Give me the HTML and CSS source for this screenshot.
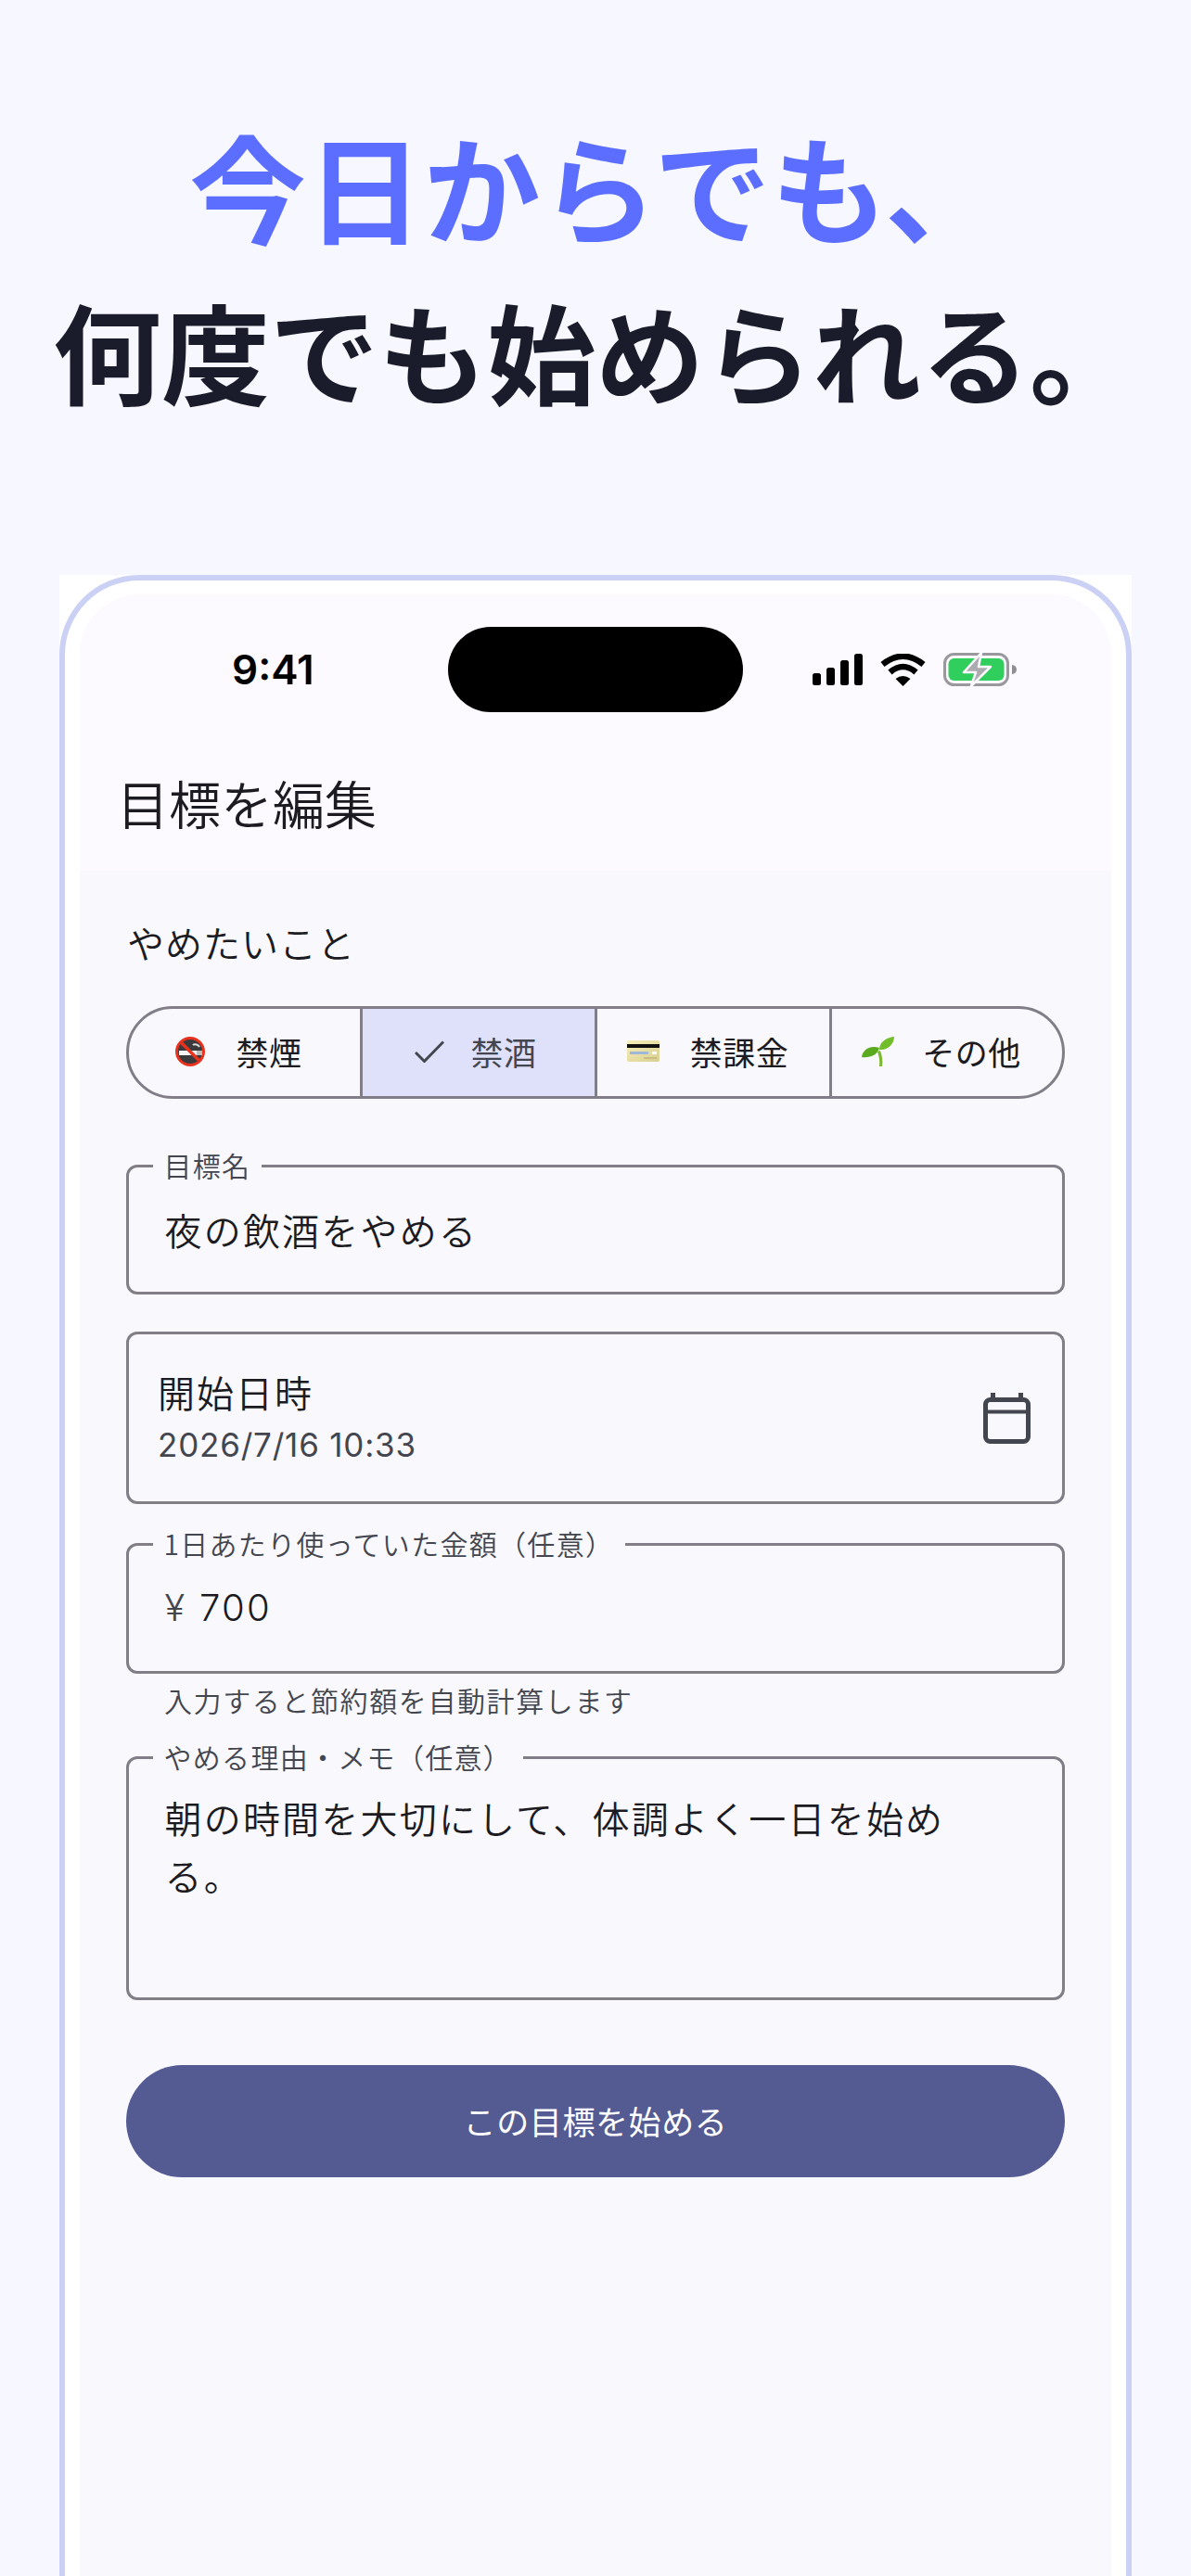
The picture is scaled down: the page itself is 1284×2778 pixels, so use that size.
FILE: index.html
```html
<!DOCTYPE html>
<html lang="ja">
<head>
<meta charset="utf-8">
<title>目標を編集</title>
<link rel="stylesheet" href="styles.css">
</head>
<body>
<header class="hero">
  <h1 class="hero-line hero-accent">今日からでも、</h1>
  <p class="hero-line hero-dark">何度でも始められる。</p>
</header>
<div class="frame">
  <div class="bezel">
    <div class="screen">
      <div class="appbar">
        <div class="status">
          <div class="time-wrap"><span class="time">9:41</span></div>
          <div class="island"></div>
          <div class="status-icons">
            <svg class="sig" width="55" height="35" viewBox="0 0 55 35"><rect x="1" y="21" width="9" height="13" rx="2.5"/><rect x="16" y="15" width="9" height="19" rx="2.5"/><rect x="31" y="7" width="9" height="27" rx="2.5"/><rect x="46" y="0" width="9" height="34" rx="2.5"/></svg>
            <svg width="49" height="35" viewBox="0 0 49 35"><path d="M2.5 11.5Q24.5-6 46.5 11.5" fill="none" stroke="#000" stroke-width="6.5"/><path d="M10.5 20Q24.5 8 38.5 20" fill="none" stroke="#000" stroke-width="6.5"/><path d="M24.5 35L16.5 27Q24.5 21 32.5 27Z"/></svg>
            <svg width="79" height="36" viewBox="0 0 79 36"><rect x="1.5" y="1.5" width="68" height="33" rx="10" fill="none" stroke="#98989d" stroke-width="3"/><rect x="5.5" y="6" width="60" height="24" rx="6" fill="#30ce5c"/><path d="M74 13c3 .5 5 2 5 5s-2 4.500-5 5z" fill="#8e8e93"/><path d="M41 0L22 21H35L30 36L51 15H38Z" fill="#ababb0" stroke="#fcf9ff" stroke-width="2.500" stroke-linejoin="round"/></svg>
          </div>
        </div>
        <h2 class="title">目標を編集</h2>
      </div>
      <main class="body">
        <div class="section-label">やめたいこと</div>
        <div class="segments">
          <div class="seg seg-emoji">
            <svg class="emoji" width="32" height="32" viewBox="0 0 32 32"><circle cx="16" cy="16" r="14.500" fill="#3a3a3c" stroke="#e8321e" stroke-width="3"/><path d="M19 9c2-2 6 0 7 2" fill="none" stroke="#ddd" stroke-width="2"/><rect x="4" y="15" width="19" height="5" fill="#f4f4f4"/><rect x="23" y="15" width="6" height="5" fill="#bbb"/><path d="M6 6L26 26" stroke="#e8321e" stroke-width="3.500"/></svg>
            <span>禁煙</span>
          </div>
          <div class="seg seg-selected">
            <svg width="32" height="24" viewBox="0 0 32 24"><path d="M1 13L10.500 22.500L31 1.500" fill="none" stroke="#44464f" stroke-width="3"/></svg>
            <span>禁酒</span>
          </div>
          <div class="seg seg-emoji">
            <svg class="emoji" width="35" height="23" viewBox="0 0 35 23"><defs><linearGradient id="card" x1="0" y1="0" x2="1" y2="1"><stop offset="0" stop-color="#f6efb8"/><stop offset="1" stop-color="#d9cf92"/></linearGradient></defs><rect width="35" height="23" rx="2" fill="url(#card)"/><rect y="4" width="35" height="4" fill="#111"/><rect x="3" y="12" width="20" height="3" fill="#9fb8d8"/><rect x="27" y="12" width="5" height="3" fill="#fff"/><rect x="18" y="18" width="14" height="2" fill="#c9bd83"/></svg>
            <span>禁課金</span>
          </div>
          <div class="seg seg-emoji seg-sprout">
            <svg class="emoji" width="35" height="32" viewBox="0 0 35 32"><path d="M19 32C20 24 18 20 17 16L20 15C22 21 23 26 22 32Z" fill="#7db82f"/><path d="M0 22C1 14 9 9 19 12C17 20 9 23 0 22Z" fill="#5aa91f"/><path d="M19 14C19 6 26 1 35 0C35 7 29 15 19 14Z" fill="#71bd2a"/></svg>
            <span>その他</span>
          </div>
        </div>
        <fieldset class="field field-name">
          <legend class="field-legend">目標名</legend>
          <div class="field-value">夜の飲酒をやめる</div>
        </fieldset>
        <div class="date-card">
          <div class="date-text">
            <div class="date-title">開始日時</div>
            <div class="date-sub">2026/7/16 10:33</div>
          </div>
          <svg width="51" height="55" viewBox="0 0 51 55"><rect x="2.500" y="7.500" width="46" height="45" rx="5" fill="none" stroke="#44464f" stroke-width="5"/><path d="M2.500 20.500H48.500" stroke="#44464f" stroke-width="4"/><rect x="8" y="0" width="5" height="8" fill="#44464f"/><rect x="38" y="0" width="5" height="8" fill="#44464f"/></svg>
        </div>
        <fieldset class="field field-amount">
          <legend class="field-legend">1日あたり使っていた金額（任意）</legend>
          <div class="field-value"><span class="yen">¥</span> 700</div>
        </fieldset>
        <div class="helper">入力すると節約額を自動計算します</div>
        <fieldset class="field field-memo">
          <legend class="field-legend">やめる理由・メモ（任意）</legend>
          <div class="field-value memo-text">朝の時間を大切にして、体調よく一日を始め<br>る。</div>
        </fieldset>
        <button class="primary" type="button">この目標を始める</button>
      </main>
    </div>
  </div>
</div>
</body>
</html>
```
FILE: styles.css
```css
* { box-sizing: border-box; }
html, body { margin: 0; height: 2778px; overflow: hidden; }
body {
  background: #f7f8ff;
  color: #1b1b21;
  font-family: "Inter", "Noto Sans CJK JP", sans-serif;
}
.hero { padding-top: 114px; text-align: center; font-family: "Noto Sans CJK JP", sans-serif; }
.hero-line { margin: 0; font-weight: 700; line-height: 170px; white-space: nowrap; }
.hero-accent { font-size: 126px; letter-spacing: .2px; color: #5b6eff; }
.hero-dark { font-size: 117px; color: #1a1c2c; margin-top: 8px; }

.frame { margin: 158px 64px 0; background: #fff; height: 2158px; overflow: hidden; }
.bezel {
  height: 2200px;
  background: #fff;
  border: 6px solid #cbd1f5;
  border-radius: 86px 86px 0 0;
  padding: 15px 16px 0;
}
.screen { height: 2200px; background: #f8f8fd; border-radius: 65px 65px 0 0; overflow: hidden; }

.appbar { background: #fcf9ff; height: 298px; padding-top: 35px; }
.status { display: grid; grid-template-columns: 1fr 318px 1fr; height: 92px; align-items: center; }
.time-wrap { padding-left: 164px; }
.time { font-family: "Inter", sans-serif; font-weight: 600; font-size: 44px; color: #000; line-height: 1; }
.island { height: 92px; border-radius: 46px; background: #000; }
.status-icons { display: flex; justify-content: flex-end; align-items: center; gap: 19px; padding-right: 102px; }
.title {
  margin: 65px 0 0;
  padding-left: 40px;
  font-size: 56px;
  font-weight: 350;
  line-height: 64px;
  color: #1b1b21;
  font-family: "Noto Sans CJK JP", sans-serif;
}

.body { padding: 53px 50px 0; font-family: "Noto Sans CJK JP", sans-serif; font-weight: 350; }
.section-label { font-size: 40px; line-height: 48px; padding-left: 1px; letter-spacing: 1px; }

.segments {
  display: grid;
  grid-template-columns: 252fr 253fr 253fr 248fr;
  margin-top: 45px;
  height: 100px;
  border: 3px solid #827e88;
  border-radius: 50px;
  overflow: hidden;
}
.seg {
  display: flex;
  align-items: center;
  justify-content: center;
  gap: 28px;
  padding: 0 6px 3px 0;
  font-size: 35px;
  font-weight: 400;
  letter-spacing: .5px;
  border-right: 3px solid #827e88;
}
.seg:last-child { border-right: 0; }
.seg-emoji { padding-right: 12px; gap: 33px; }
.seg-sprout { gap: 30px; }
.seg-selected { background: #dfe0f9; color: #44464f; }

.field {
  margin: 55px 0 0;
  padding: 21px 38.5px 37px;
  min-width: 0;
  border: 3px solid #827e88;
  border-radius: 12px;
}
.field-legend {
  margin-left: -13px;
  padding: 0 12px 3px;
  font-size: 30px;
  letter-spacing: 1.3px;
  line-height: 32px;
  color: #44464f;
}
.field-value { font-size: 40px; letter-spacing: 2.2px; line-height: 60px; color: #1b1b21; }
.field-amount { margin-top: 26px; padding-bottom: 38px; }
.field-amount .field-value { font-family: "Inter", "Noto Sans CJK JP", sans-serif; letter-spacing: 2.3px; }
.yen { color: #44464f; }
.field-memo { margin-top: 25px; padding-top: 16px; padding-bottom: 101px; }
.memo-text { line-height: 62px; white-space: nowrap; }

.date-card {
  display: flex;
  align-items: center;
  justify-content: space-between;
  height: 186px;
  margin-top: 40px;
  padding: 0 34px 0 31px;
  border: 3px solid #827e88;
  border-radius: 12px;
}
.date-title { font-size: 40px; letter-spacing: 2px; line-height: 52px; }
.date-sub { font-family: "Inter", sans-serif; font-size: 35px; font-weight: 400; letter-spacing: .8px; line-height: 52px; margin-top: 5px; color: #44464f; }

.helper { margin-top: 8px; padding-left: 41px; font-size: 30px; letter-spacing: 1.6px; line-height: 40px; color: #44464f; }

.primary {
  display: block;
  width: 100%;
  height: 121px;
  margin-top: 70px;
  padding-bottom: 4px;
  border: 0;
  border-radius: 61px;
  background: #545a92;
  color: #fff;
  font-family: "Noto Sans CJK JP", sans-serif;
  font-size: 35px;
  font-weight: 400;
  letter-spacing: .6px;
}
```
